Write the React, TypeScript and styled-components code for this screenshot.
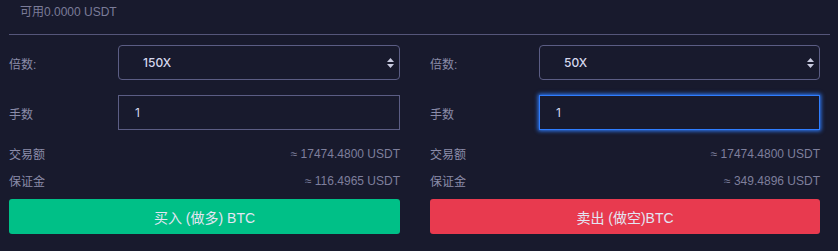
import React from "react";
import styled, { createGlobalStyle } from "styled-components";

const GlobalStyle = createGlobalStyle`
    html, body {
        margin: 0;
        padding: 0;
        background-color: #181a2d;
        font-family: "Liberation Sans", "Noto Sans CJK SC", sans-serif;
    }
`;

const Page = styled.div`
    width: 838px;
    height: 251px;
    padding: 0 8px 0 9px;
    box-sizing: border-box;
    background-color: #181a2d;
`;

const Balance = styled.div`
    height: 35px;
    padding: 5px 0 0 11px;
    box-sizing: border-box;
    font-size: 12px;
    line-height: 14px;
    color: #7b7c99;
    border-bottom: 1px solid #55567a;
`;

const Columns = styled.div`
    display: grid;
    grid-template-columns: 391px 390px;
    column-gap: 30px;
    padding-top: 10px;
`;

const Column = styled.div`
    display: flex;
    flex-direction: column;
`;

const FieldRow = styled.div<{ $gap?: number }>`
    display: grid;
    grid-template-columns: 109px 1fr;
    align-items: center;
    height: 35px;
    margin-top: ${props => props.$gap ?? 0}px;
`;

const Label = styled.span`
    font-size: 12px;
    color: #8b8ca9;
    padding-top: 2px;
`;

const SelectWrap = styled.div`
    position: relative;
    height: 35px;
`;

const Select = styled.select`
    appearance: none;
    width: 100%;
    height: 100%;
    box-sizing: border-box;
    padding: 0 0 0 24px;
    background: transparent;
    border: 1px solid #5b5d84;
    border-radius: 4px;
    color: #d6d8ee;
    font-family: Inter, "Noto Sans CJK SC", sans-serif;
    font-size: 12px;
    font-weight: 500;
    outline: none;
`;

const Arrows = styled.svg`
    position: absolute;
    right: 6px;
    top: 13px;
    pointer-events: none;
`;

const Input = styled.input<{ $focused?: boolean }>`
    width: 100%;
    height: 35px;
    box-sizing: border-box;
    padding: 0 16px;
    background: transparent;
    border: 1px solid ${props => (props.$focused ? "#2f7dff" : "#5b5d84")};
    box-shadow: ${props => (props.$focused ? "0 0 4px 1px #2f7dff" : "none")};
    color: #d6d8ee;
    font-family: Inter, "Noto Sans CJK SC", sans-serif;
    font-size: 12px;
    font-weight: 400;
    caret-color: #d6d8ee;
    outline: none;
`;

const InfoRow = styled.div<{ $first?: boolean }>`
    display: flex;
    justify-content: space-between;
    align-items: center;
    height: 27px;
    margin-top: ${props => (props.$first ? 10 : 0)}px;
    font-size: 12px;
    color: #8b8ca9;
`;

const Value = styled.span`
    color: #7e7f9c;
`;

const ActionButton = styled.button<{ $side: "buy" | "sell" }>`
    margin-top: 5px;
    height: 35px;
    border: none;
    border-radius: 3px;
    background-color: ${props => (props.$side === "buy" ? "#00c087" : "#e83a4f")};
    color: #e3e5f3;
    font-family: inherit;
    font-size: 14px;
    cursor: pointer;
`;

const UpDown = () => (
    <Arrows width="7" height="10" viewBox="0 0 7 10">
        <path d="M3.5 0 L7 4 L0 4 Z" fill="#c9cbe0" />
        <path d="M3.5 10 L7 6 L0 6 Z" fill="#c9cbe0" />
    </Arrows>
);

interface TradeColumnProps {
    leverage: string;
    options: string[];
    amount: string;
    margin: string;
    side: "buy" | "sell";
    buttonText: string;
    focused?: boolean;
}

const TradeColumn = ({ leverage, options, amount, margin, side, buttonText, focused }: TradeColumnProps) => (
    <Column>
        <FieldRow>
            <Label>倍数:</Label>
            <SelectWrap>
                <Select defaultValue={leverage}>
                    {options.map(o => (
                        <option key={o} value={o}>{o}</option>
                    ))}
                </Select>
                <UpDown />
            </SelectWrap>
        </FieldRow>
        <FieldRow $gap={15}>
            <Label>手数</Label>
            <Input $focused={focused} defaultValue="1" autoFocus={focused} />
        </FieldRow>
        <InfoRow $first>
            <span>交易额</span>
            <Value>≈ {amount} USDT</Value>
        </InfoRow>
        <InfoRow>
            <span>保证金</span>
            <Value>≈ {margin} USDT</Value>
        </InfoRow>
        <ActionButton $side={side}>{buttonText}</ActionButton>
    </Column>
);

const leverages = ["10X", "20X", "50X", "100X", "150X"];

export default function App() {
    return (
        <Page>
            <GlobalStyle />
            <Balance>可用0.0000 USDT</Balance>
            <Columns>
                <TradeColumn
                    leverage="150X"
                    options={leverages}
                    amount="17474.4800"
                    margin="116.4965"
                    side="buy"
                    buttonText="买入 (做多) BTC"
                />
                <TradeColumn
                    leverage="50X"
                    options={leverages}
                    amount="17474.4800"
                    margin="349.4896"
                    side="sell"
                    buttonText="卖出 (做空)BTC"
                    focused
                />
            </Columns>
        </Page>
    );
}
